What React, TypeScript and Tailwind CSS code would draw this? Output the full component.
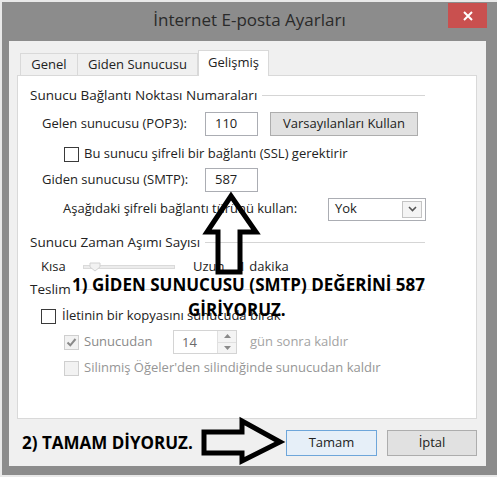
import React from "react";

const Check = ({ checked = false, disabled = false }: { checked?: boolean; disabled?: boolean }) => (
    <span
        className={
            "flex h-[15px] w-[15px] shrink-0 items-center justify-center border " +
            (disabled ? "border-[#cfcfcf] bg-[#f2f2f2]" : "border-[#3a3a3a] bg-white")
        }
    >
        {checked && (
            <svg width="11" height="11" viewBox="0 0 11 11">
                <path d="M1.5 5.5 L4.3 8.3 L9.5 2" fill="none" stroke="#8a8a8a" strokeWidth="2" />
            </svg>
        )}
    </span>
);

const GroupTitle = ({ title }: { title: string }) => (
    <div className="flex h-[20px] w-[395px] items-center">
        <span className="mr-[5px] text-[13.5px]">{title}</span>
        <span className="h-px flex-1 bg-[#d5d5d5]" />
    </div>
);

const App = () => {
    return (
        <div className="relative h-[477px] w-[497px] overflow-hidden bg-[#e9e9e9] pl-[2px] pt-[2px] text-[13px] text-[#222] [font-family:'Open_Sans',sans-serif]">
            {/* window frame */}
            <div className="h-[473px] w-[495px] bg-[#8c8c8c]">
                <div className="grid h-[39px] grid-cols-[1fr_auto_1fr]">
                    <div />
                    <div className="pt-[6px] text-[17px] leading-[24px] text-[#2a2a2a]">İnternet E-posta Ayarları</div>
                    <div className="flex justify-end pr-[10px] pt-[1px]">
                        <div className="flex h-[25px] w-[39px] items-center justify-center bg-[#c9504f] text-white">
                            <svg width="10" height="10" viewBox="0 0 10 10">
                                <path d="M1 1 L9 9 M9 1 L1 9" stroke="white" strokeWidth="2" />
                            </svg>
                        </div>
                    </div>
                </div>

                {/* client area */}
                <div className="ml-[7px] h-[425px] w-[477px] bg-[#f0f0f0] pl-[8px] pt-[9px]">
                    {/* tabs */}
                    <div className="flex h-[25px] items-end pl-[3px]">
                        <div className="flex h-[22px] w-[58px] items-center justify-center border border-b-0 border-[#d9d9d9] bg-[#f0f0f0]">
                            Genel
                        </div>
                        <div className="flex h-[22px] w-[120px] items-center justify-center border border-b-0 border-l-0 border-[#d9d9d9] bg-[#f0f0f0]">
                            Giden Sunucusu
                        </div>
                        <div className="relative z-10 -mb-px flex h-[26px] w-[71px] items-start justify-center border border-b-0 border-[#d9d9d9] bg-white pt-[2px]">
                            Gelişmiş
                        </div>
                    </div>

                    {/* panel */}
                    <div className="h-[344px] w-[460px] border border-[#d9d9d9] bg-white pl-[12px] pt-[9px]">
                        <GroupTitle title="Sunucu Bağlantı Noktası Numaraları" />

                        <div className="mt-[7px] flex h-[24px] items-center pl-[12px]">
                            <span className="w-[163px]">Gelen sunucusu (POP3):</span>
                            <div className="flex h-[24px] w-[53px] items-center border border-[#abadb3] bg-white pl-[9px]">110</div>
                            <div className="ml-[12px] flex h-[24px] w-[148px] items-center justify-center border border-[#adadad] bg-[#e1e1e1]">
                                Varsayılanları Kullan
                            </div>
                        </div>

                        <div className="mt-[10px] flex h-[16px] items-center gap-[5px] pl-[34px]">
                            <Check />
                            <span>Bu sunucu şifreli bir bağlantı (SSL) gerektirir</span>
                        </div>

                        <div className="mt-[6px] flex h-[24px] items-center pl-[12px]">
                            <span className="w-[163px]">Giden sunucusu (SMTP):</span>
                            <div className="flex h-[24px] w-[53px] items-center border border-[#abadb3] bg-white pl-[9px]">587</div>
                        </div>

                        <div className="mt-[5px] flex h-[24px] items-center pl-[33px]">
                            <span className="w-[265px]">Aşağıdaki şifreli bağlantı türünü kullan:</span>
                            <div className="flex h-[23px] w-[98px] items-center justify-between border border-[#abadb3] bg-white pl-[6px] pr-[3px]">
                                <span>Yok</span>
                                <span className="flex h-[17px] w-[20px] items-center justify-center border border-[#c4c4c4] bg-[#f4f4f4]">
                                    <svg width="9" height="6" viewBox="0 0 9 6">
                                        <path d="M1 1 L4.5 4.5 L8 1" fill="none" stroke="#555" strokeWidth="1.6" />
                                    </svg>
                                </span>
                            </div>
                        </div>

                        <div className="mt-[11px]">
                            <GroupTitle title="Sunucu Zaman Aşımı Sayısı" />
                        </div>

                        <div className="mt-[7px] flex h-[16px] items-center pl-[11px]">
                            <span className="w-[42px]">Kısa</span>
                            <div className="relative flex h-[16px] w-[92px] items-center">
                                <div className="h-[4px] w-full border border-[#dadada] bg-[#ececec]" />
                                <svg className="absolute left-[6px] top-[2px]" width="12" height="12" viewBox="0 0 12 12">
                                    <path d="M1 2 H11 V6 L6 10 L1 6 Z" fill="#f2f2f2" stroke="#d2d2d2" />
                                </svg>
                            </div>
                            <span className="ml-[18px]">Uzun</span>
                            <span className="ml-[14px]">1 dakika</span>
                        </div>

                        <div className="mt-[4px]">
                            <GroupTitle title="Teslim" />
                        </div>

                        <div className="mt-[9px] flex h-[16px] items-center gap-[6px] pl-[11px]">
                            <Check />
                            <span>İletinin bir kopyasını sunucuda bırak</span>
                        </div>

                        <div className="mt-[6px] flex h-[24px] items-center pl-[34px] text-[#8a8a8a]">
                            <Check checked disabled />
                            <span className="ml-[5px] w-[89px]">Sunucudan</span>
                            <div className="flex h-[24px] w-[64px] border border-[#d4d4d4] bg-white">
                                <span className="flex flex-1 items-center pl-[8px] pt-[2px] text-[#6a6a6a]">14</span>
                                <div className="flex w-[19px] flex-col border-l border-[#e0e0e0] bg-[#f4f4f4]">
                                    <span className="flex flex-1 items-center justify-center border-b border-[#e0e0e0]">
                                        <svg width="7" height="4" viewBox="0 0 7 4">
                                            <path d="M0 4 L3.5 0 L7 4 Z" fill="#8a8a8a" />
                                        </svg>
                                    </span>
                                    <span className="flex flex-1 items-center justify-center">
                                        <svg width="7" height="4" viewBox="0 0 7 4">
                                            <path d="M0 0 L3.5 4 L7 0 Z" fill="#8a8a8a" />
                                        </svg>
                                    </span>
                                </div>
                            </div>
                            <span className="ml-[13px] text-[#a3a3a3]">gün sonra kaldır</span>
                        </div>

                        <div className="mt-[6px] flex h-[16px] items-center gap-[5px] pl-[34px] text-[#969696]">
                            <Check disabled />
                            <span>Silinmiş Öğeler'den silindiğinde sunucudan kaldır</span>
                        </div>
                    </div>

                    {/* buttons */}
                    <div className="mt-[11px] flex w-[460px] justify-end gap-[10px]">
                        <div className="flex h-[26px] w-[91px] items-center justify-center border border-[#6ea6da] bg-[#e6eff8]">
                            Tamam
                        </div>
                        <div className="flex h-[26px] w-[90px] items-center justify-center border border-[#adadad] bg-[#e1e1e1]">
                            İptal
                        </div>
                    </div>
                </div>
            </div>

            {/* annotations drawn over the dialog */}
            <svg className="pointer-events-none absolute left-0 top-0" width="497" height="477" viewBox="0 0 497 477">
                <path
                    d="M231 196 L256 232 L240 232 L240 272 L218 272 L218 232 L207 232 Z"
                    fill="none"
                    stroke="#000"
                    strokeWidth="5"
                    strokeLinejoin="miter"
                />
                <path
                    d="M204 432 L242 432 L242 421 L280 442 L242 461 L242 453 L204 453 Z"
                    fill="none"
                    stroke="#000"
                    strokeWidth="5"
                    strokeLinejoin="miter"
                />
            </svg>
            <div className="absolute left-[72px] top-[272px] text-[17px] font-bold leading-[25px] text-black">
                <div>1) GİDEN SUNUCUSU (SMTP) DEĞERİNİ 587</div>
                <div className="pl-[116px]">GİRİYORUZ.</div>
            </div>
            <div className="absolute left-[22px] top-[430px] text-[17px] font-bold leading-[26px] text-black">
                2) TAMAM DİYORUZ.
            </div>
        </div>
    );
};

export default App;
